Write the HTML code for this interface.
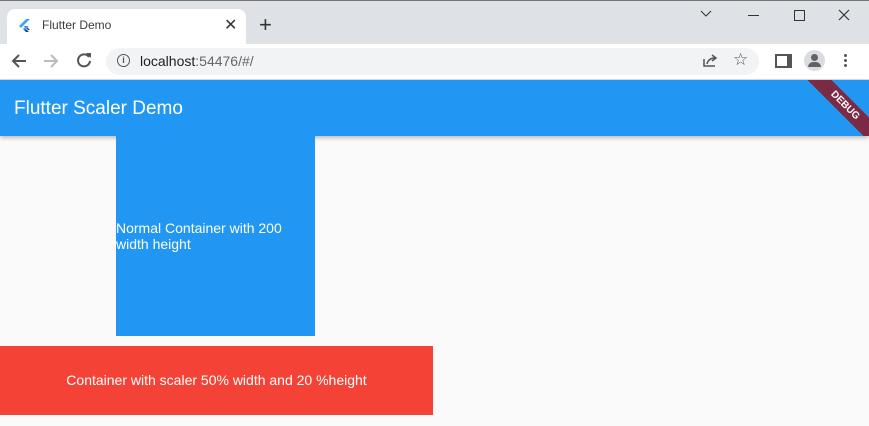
<!DOCTYPE html>
<html><head><style>
body{margin:0;width:869px;height:426px;overflow:hidden;background:#fafafa;font-family:"Liberation Sans",Arial,sans-serif;position:relative}
.abs{position:absolute}
</style></head><body>
<div class="abs" style="left:0;top:0;width:869px;height:44px;background:#dee1e6;border-top:1px solid #777;box-sizing:border-box"></div>
<div class="abs" style="left:7px;top:9px;width:239px;height:36px;background:#fff;border-radius:8px 8px 0 0"></div>
<svg class="abs" style="left:19px;top:19px" width="12" height="14" viewBox="0 0 12 14"><path d="M7 0L0 7l2 2 9-9z" fill="#42a5f5"/><path d="M5 7l4 4 2 0-4-4z M4 10l3 3 3 0-3-3z" fill="#0d47a1"/><path d="M4 10l3-3h3l-4 4z" fill="#42a5f5"/></svg>
<div class="abs" style="left:42px;top:18px;font-size:12px;color:#3c3c3c">Flutter Demo</div>
<div class="abs" style="left:224px;top:15px;font-size:16px;color:#333">✕</div>
<div class="abs" style="left:259px;top:12px;font-size:22px;color:#333">+</div>
<svg class="abs" style="left:700px;top:10px" width="12" height="8"><path d="M1 1l5 5 5-5" stroke="#333" fill="none"/></svg>
<div class="abs" style="left:748px;top:15px;width:11px;height:1px;background:#333"></div>
<div class="abs" style="left:794px;top:10px;width:9px;height:9px;border:1px solid #333"></div>
<svg class="abs" style="left:838px;top:9px" width="12" height="12"><path d="M1 1l10 10M11 1L1 11" stroke="#333" stroke-width="1.2"/></svg>
<div class="abs" style="left:0;top:44px;width:869px;height:35px;background:#fff;border-bottom:1px solid #ddd"></div>
<svg class="abs" style="left:11px;top:53px" width="16" height="16"><path d="M15 8H2M8 2L2 8l6 6" stroke="#555" stroke-width="2" fill="none"/></svg>
<svg class="abs" style="left:43px;top:53px" width="16" height="16"><path d="M1 8h13M8 2l6 6-6 6" stroke="#bbb" stroke-width="2" fill="none"/></svg>
<svg class="abs" style="left:76px;top:52px" width="16" height="16"><path d="M13 5A6 6 0 1 0 14 9" stroke="#555" stroke-width="2" fill="none"/><path d="M10 1h5v5z" fill="#555"/></svg>
<div class="abs" style="left:106px;top:48px;width:653px;height:27px;background:#f1f3f4;border-radius:14px"></div>
<div class="abs" style="left:117px;top:54px;width:11px;height:11px;border:1.5px solid #555;border-radius:50%;font-size:9px;text-align:center;line-height:11px;font-weight:bold;color:#555">i</div>
<div class="abs" style="left:140px;top:53px;font-size:14px;color:#202124">localhost<span style="color:#666">:54476/#/</span></div>
<svg class="abs" style="left:702px;top:53px" width="16" height="15"><path d="M2 6v7h11" stroke="#555" stroke-width="1.5" fill="none"/><path d="M5 11c1-4 4-6 8-6M10 2l4 3-4 3" stroke="#555" stroke-width="1.5" fill="none"/></svg>
<div class="abs" style="left:733px;top:50px;font-size:17px;color:#555">☆</div>
<div class="abs" style="left:775px;top:54px;width:10px;height:10px;border:2px solid #555;border-right-width:5px"></div>
<div class="abs" style="left:804px;top:50px;width:21px;height:21px;border-radius:50%;background:#dadce0"></div>
<div class="abs" style="left:811px;top:54px;width:7px;height:7px;border-radius:50%;background:#5f6368"></div>
<div class="abs" style="left:808px;top:62px;width:13px;height:5px;border-radius:6px 6px 0 0;background:#5f6368"></div>
<div class="abs" style="left:844px;top:54px;width:3px;height:3px;background:#555;border-radius:50%;box-shadow:0 5px #555,0 10px #555"></div>
<div class="abs" style="left:0;top:80px;width:869px;height:56px;background:#2196f3;box-shadow:0 2px 4px rgba(0,0,0,.25);overflow:hidden">
<div class="abs" style="left:14px;top:18px;font-size:19px;color:#fff">Flutter Scaler Demo</div>
<div class="abs" style="left:790px;top:17px;width:110px;height:17px;background:#7a2a45;transform:rotate(45deg);color:#fff;font-size:10px;font-weight:bold;text-align:center;line-height:17px">DEBUG</div>
</div>
<div class="abs" style="left:116px;top:136px;width:199px;height:200px;background:#2196f3"></div>
<div class="abs" style="left:116px;top:220px;width:199px;font-size:14px;color:#fff;line-height:16px">Normal Container with 200 width height</div>
<div class="abs" style="left:0;top:346px;width:433px;height:69px;background:#f44336;color:#fff;font-size:14px;text-align:center;line-height:69px">Container with scaler 50% width and 20 %height</div>
</body></html>
